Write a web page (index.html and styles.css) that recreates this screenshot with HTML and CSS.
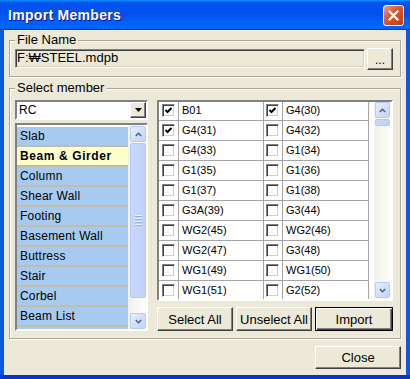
FILE: index.html
```html
<!DOCTYPE html>
<html lang="en">
<head>
<meta charset="UTF-8" />
<title>Import Members</title>
<link rel="stylesheet" href="styles.css">
</head>
<body>

<div class="window">
  <div class="titlebar">
    <span class="title">Import Members</span>
    <span class="close-x">
      <svg width="11" height="11" viewBox="0 0 11 11"><path d="M1.5 1.5 L9.5 9.5 M9.5 1.5 L1.5 9.5" stroke="#fff" stroke-width="2.2" stroke-linecap="square"/></svg>
    </span>
  </div>

  <div class="frame">
    <div class="client">

      <!-- file name -->
      <div class="group file-group">
        <span class="group-label">File Name</span>
        <div class="path-field">F:₩STEEL.mdpb</div>
        <button class="btn browse-btn">...</button>
      </div>

      <!-- member picker -->
      <div class="group member-group">
        <span class="group-label">Select member</span>

        <div class="left-col">
          <div class="combo">
            <span class="combo-text">RC</span>
            <span class="combo-btn"><svg width="7" height="4" viewBox="0 0 7 4"><polygon points="0,0 7,0 3.5,4" fill="#000"/></svg></span>
          </div>
          <div class="listbox">
            <ul class="kinds">
              <li>Slab</li>
              <li class="sel">Beam &amp; Girder</li>
              <li>Column</li>
              <li>Shear Wall</li>
              <li>Footing</li>
              <li>Basement Wall</li>
              <li>Buttress</li>
              <li>Stair</li>
              <li>Corbel</li>
              <li>Beam List</li>
              <li>&nbsp;</li>
            </ul>
            <div class="vscroll list-scroll">
              <span class="sb-btn"><svg width="7" height="5" viewBox="0 0 7 5"><path d="M0.8 4 L3.5 1.3 L6.2 4" stroke="#4d6185" stroke-width="1.6" fill="none"/></svg></span>
              <span class="sb-thumb tall"><i></i><i></i><i></i><i></i></span>
              <span class="sb-track"></span>
              <span class="sb-btn"><svg width="7" height="5" viewBox="0 0 7 5"><path d="M0.8 1 L3.5 3.7 L6.2 1" stroke="#4d6185" stroke-width="1.6" fill="none"/></svg></span>
            </div>
          </div>
        </div>

        <div class="right-col">
          <div class="grid-box">
            <div class="members">
              <span class="cc"><span class="chk on"></span></span><span class="cn">B01</span>
              <span class="cc"><span class="chk on"></span></span><span class="cn">G4(30)</span>
              <span class="cc"><span class="chk on"></span></span><span class="cn">G4(31)</span>
              <span class="cc"><span class="chk"></span></span><span class="cn">G4(32)</span>
              <span class="cc"><span class="chk"></span></span><span class="cn">G4(33)</span>
              <span class="cc"><span class="chk"></span></span><span class="cn">G1(34)</span>
              <span class="cc"><span class="chk"></span></span><span class="cn">G1(35)</span>
              <span class="cc"><span class="chk"></span></span><span class="cn">G1(36)</span>
              <span class="cc"><span class="chk"></span></span><span class="cn">G1(37)</span>
              <span class="cc"><span class="chk"></span></span><span class="cn">G1(38)</span>
              <span class="cc"><span class="chk"></span></span><span class="cn">G3A(39)</span>
              <span class="cc"><span class="chk"></span></span><span class="cn">G3(44)</span>
              <span class="cc"><span class="chk"></span></span><span class="cn">WG2(45)</span>
              <span class="cc"><span class="chk"></span></span><span class="cn">WG2(46)</span>
              <span class="cc"><span class="chk"></span></span><span class="cn">WG2(47)</span>
              <span class="cc"><span class="chk"></span></span><span class="cn">G3(48)</span>
              <span class="cc"><span class="chk"></span></span><span class="cn">WG1(49)</span>
              <span class="cc"><span class="chk"></span></span><span class="cn">WG1(50)</span>
              <span class="cc"><span class="chk"></span></span><span class="cn">WG1(51)</span>
              <span class="cc"><span class="chk"></span></span><span class="cn">G2(52)</span>
            </div>
            <div class="vscroll grid-scroll">
              <span class="sb-btn"><svg width="7" height="5" viewBox="0 0 7 5"><path d="M0.8 4 L3.5 1.3 L6.2 4" stroke="#4d6185" stroke-width="1.6" fill="none"/></svg></span>
              <span class="sb-thumb small"></span>
              <span class="sb-track"></span>
              <span class="sb-btn"><svg width="7" height="5" viewBox="0 0 7 5"><path d="M0.8 1 L3.5 3.7 L6.2 1" stroke="#4d6185" stroke-width="1.6" fill="none"/></svg></span>
            </div>
          </div>
          <div class="btn-row">
            <button class="btn">Select All</button>
            <button class="btn">Unselect All</button>
            <button class="btn default">Import</button>
          </div>
        </div>
      </div>

      <div class="footer-row">
        <button class="btn close-btn">Close</button>
      </div>

    </div>
  </div>
</div>

</body>
</html>
```

FILE: styles.css
```css
/* — dialog frame — */
*{box-sizing:border-box;}
body{margin:0;background:#fff;font-family:"Liberation Sans",Arial,sans-serif;color:#000;}
.window{width:410px;height:379px;display:flex;flex-direction:column;background:#0a53e0;}
.titlebar{
  height:30px;flex:none;display:flex;align-items:center;justify-content:space-between;padding:0 6px 0 8px;
  background:linear-gradient(180deg,#0997ff,#0053ee 8%,#0050ee 40%,#06f 88%,#06f 93%,#005bff 95%,#003dd7 96%,#003dd7);
}
.title{color:#fff;font-weight:bold;font-size:14px;letter-spacing:.3px;text-shadow:1px 1px #0f1089;}
.close-x{
  width:21px;height:21px;display:flex;align-items:center;justify-content:center;
  border:1px solid #fff;border-radius:3px;
  background:linear-gradient(135deg,#eba088,#dc5a33 40%,#c23c12);
}
.frame{flex:1;padding:0 4px;background:#0b58e4;border-bottom:4px solid #0735cc;}
.client{height:100%;background:#ece9d8;padding:10px 5px 0;display:flex;flex-direction:column;font-size:13px;}

/* — group boxes — */
.group{position:relative;border:1px solid #aca899;box-shadow:inset 1px 1px #fff,1px 1px #fff;}
.group-label{position:absolute;left:5px;top:-9px;padding:0 2px;background:#ece9d8;line-height:16px;}

.file-group{height:37px;flex:none;display:flex;align-items:center;gap:2px;padding:0 7px 0 5px;}
.path-field{
  flex:1;height:19px;line-height:15px;padding-left:1px;background:#ece9d8;
  border:1px solid;border-color:#808080 #fff #fff #808080;box-shadow:inset 1px 1px #404040,inset -1px -1px #d4d0c8;
}

.member-group{height:251px;flex:none;margin-top:11px;display:flex;gap:9px;padding:11px 7px 0 5px;}
.left-col{width:133px;display:flex;flex-direction:column;gap:3px;}
.right-col{width:236px;display:flex;flex-direction:column;gap:6px;}

/* — buttons — */
.btn{
  font-family:inherit;font-size:13px;color:#000;background:#ece9d8;padding:0;margin:0;
  border:1px solid;border-color:#fff #404040 #404040 #fff;box-shadow:inset -1px -1px #808080;
}
.btn.default{border:1px solid #000;box-shadow:inset 1px 1px #fff,inset -1px -1px #404040,inset -2px -2px #808080;}
.browse-btn{width:26px;height:22px;font-size:12px;padding-top:3px;}
.btn-row{display:flex;gap:3px;}
.btn-row .btn{width:76px;height:24px;}
.btn-row .btn.default{width:78px;}
.footer-row{display:flex;justify-content:flex-end;margin-top:7px;}
.close-btn{width:86px;height:23px;}

/* — sunken fields — */
.combo,.listbox,.grid-box{
  border:2px solid;border-color:#808080 #fff #fff #808080;
}
.combo{height:20px;background:#fff;display:flex;align-items:center;justify-content:space-between;font-size:12px;}
.combo-text{padding-left:2px;}
.combo-btn{
  width:16px;height:16px;display:flex;align-items:center;justify-content:center;background:#ece9d8;
  border:1px solid;border-color:#fff #404040 #404040 #fff;box-shadow:inset -1px -1px #808080;
}

/* — member kind list — */
.listbox{height:208px;display:flex;background:#fff;}
.kinds{list-style:none;margin:0;padding:2px 0 0;width:111px;overflow:hidden;font-size:12px;}
.kinds li{height:20px;line-height:18px;padding-left:3px;background:#a6caf0;border-bottom:2px solid #c3bca8;white-space:nowrap;letter-spacing:.2px;}
.kinds li.sel{background:#ffffcc;font-weight:bold;letter-spacing:.6px;}

/* — XP scrollbars — */
.vscroll{display:flex;flex-direction:column;background:linear-gradient(90deg,#f3f1ea,#fefefb);}
.list-scroll{width:18px;padding:1px 0 0 2px;}
.grid-scroll{width:17px;padding:0 1px 1px 1px;}
.sb-btn{
  height:16px;flex:none;display:flex;align-items:center;justify-content:center;
  border:1px solid #b9cbf3;border-radius:2px;background:linear-gradient(135deg,#e6eefe,#c1d3fb);
}
.sb-thumb{
  flex:none;display:flex;flex-direction:column;align-items:center;justify-content:center;gap:1px;
  border:1px solid #b5c8f3;border-radius:2px;background:linear-gradient(90deg,#c9d8fc,#bed0fa);margin-top:1px;
}
.sb-thumb.tall{height:155px;}
.sb-thumb.small{height:7px;}
.sb-thumb i{display:block;width:7px;height:1px;background:#eef3fe;box-shadow:0 1px #8cb0f8;margin-bottom:1px;}
.sb-track{flex:1;}

/* — member grid — */
.grid-box{height:201px;display:flex;background:#fff;overflow:hidden;}
.members{
  width:215px;margin-top:-1px;display:grid;grid-template-columns:20px 85px 19px 86px;grid-auto-rows:20px;
  font-size:11px;align-content:start;
}
.cc,.cn{border-right:1px solid #a5a5a5;border-bottom:1px solid #a5a5a5;}
.cc{display:flex;align-items:center;justify-content:center;padding-right:1px;}
.cn{line-height:19px;padding-left:3px;}
.chk{
  width:13px;height:13px;display:block;background:#fff;
  border:1px solid;border-color:#808080 #fff #fff #808080;box-shadow:inset 1px 1px #404040,inset -1px -1px #d4d0c8;
}
.chk.on{
  background:#fff url("data:image/svg+xml,%3Csvg xmlns='http://www.w3.org/2000/svg' width='11' height='11'%3E%3Cpath d='M2.5 5 L4.5 7 L8.5 3' stroke='%23000' stroke-width='2' fill='none'/%3E%3C/svg%3E") center/11px no-repeat;
}
```
